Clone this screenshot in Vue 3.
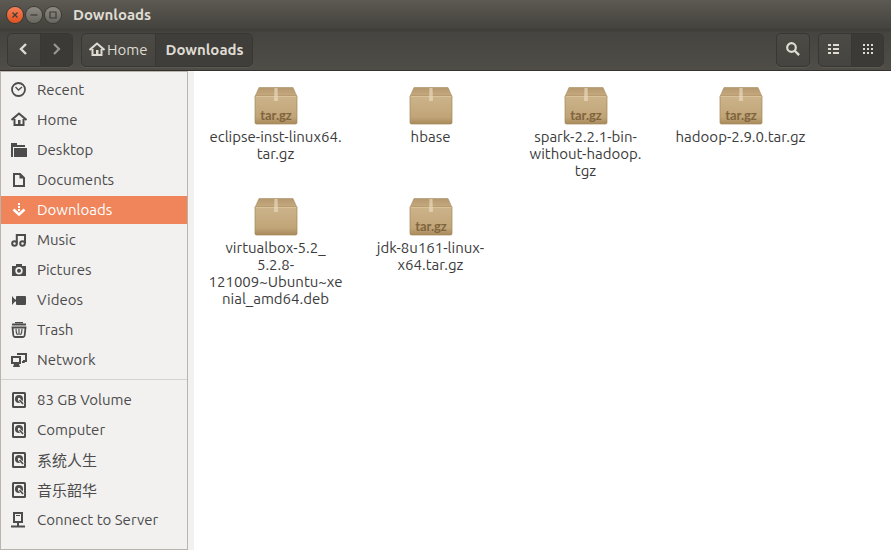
<template>
  <div class="window">
    <header class="header">
      <div class="titlebar">
        <div class="controls">
          <button class="control close" aria-label="Close">
            <svg width="16" height="16" viewBox="0 0 16 16">
              <path d="M5.5 5.5l5 5M10.5 5.5l-5 5" />
            </svg>
          </button>
          <button class="control" aria-label="Minimize">
            <svg width="16" height="16" viewBox="0 0 16 16">
              <path d="M4.5 8h7" />
            </svg>
          </button>
          <button class="control" aria-label="Maximize">
            <svg width="16" height="16" viewBox="0 0 16 16">
              <path d="M5 5h6v6H5z" />
            </svg>
          </button>
        </div>
        <h1 class="title">Downloads</h1>
      </div>

      <div class="toolbar">
        <div class="group">
          <button class="tool" aria-label="Back">
            <svg width="16" height="16" viewBox="0 0 16 16">
              <path d="M10 2L5 7l5 5" fill="none" stroke="currentColor" stroke-width="2.4" />
            </svg>
          </button>
          <button class="tool pressed dim" aria-label="Forward">
            <svg width="16" height="16" viewBox="0 0 16 16">
              <path d="M5 2l5 5-5 5" fill="none" stroke="currentColor" stroke-width="2.2" />
            </svg>
          </button>
        </div>
        <nav class="group path">
          <button class="crumb">
            <svg width="16" height="16" viewBox="0 0 16 16" v-html="icons.home"></svg>
            <span class="label">Home</span>
          </button>
          <button class="crumb current"><span class="label">Downloads</span></button>
        </nav>
        <div class="spacer"></div>
        <div class="group">
          <button class="tool" aria-label="Search">
            <svg width="16" height="16" viewBox="0 0 16 16">
              <circle cx="6.5" cy="5.5" r="4.3" fill="none" stroke="currentColor" stroke-width="2.2" />
              <path d="M9.5 8.5l4.6 4.6" stroke="currentColor" stroke-width="2.4" />
            </svg>
          </button>
        </div>
        <div class="group">
          <button class="tool" aria-label="List view">
            <svg width="16" height="16" viewBox="0 0 16 16" fill="currentColor">
              <path d="M1 2h3v2H1zM1 6h3v2H1zM1 10h3v2H1zM6 2h6v2H6zM6 6h6v2H6zM6 10h6v2H6z" />
            </svg>
          </button>
          <button class="tool pressed" aria-label="Icon view">
            <svg width="16" height="16" viewBox="0 0 16 16" fill="currentColor">
              <path d="M3 2h2v2H3zM7 2h2v2H7zM11 2h2v2h-2zM3 6h2v2H3zM7 6h2v2H7zM11 6h2v2h-2zM3 10h2v2H3zM7 10h2v2H7zM11 10h2v2h-2z" />
            </svg>
          </button>
        </div>
      </div>
    </header>

    <div class="body">
      <aside class="sidebar">
        <ul v-for="(section, i) in places" :key="i" class="section">
          <li v-for="place in section" :key="place.name">
            <a href="#" class="place" :class="{ active: place.name === 'Downloads' }">
              <svg width="16" height="16" viewBox="0 0 16 16" v-html="icons[place.icon]"></svg>
              <span class="label">{{ place.name }}</span>
            </a>
          </li>
        </ul>
      </aside>

      <main class="files">
        <div v-for="file in files" :key="file.name" class="file">
          <svg class="package" width="44" height="38" viewBox="0 0 44 38">
            <defs>
              <linearGradient id="flap" x1="0" y1="0" x2="0" y2="1">
                <stop offset="0" stop-color="#b5986e" />
                <stop offset="1" stop-color="#c6aa80" />
              </linearGradient>
              <linearGradient id="front" x1="0" y1="0" x2="0" y2="1">
                <stop offset="0" stop-color="#cdb38a" />
                <stop offset="0.75" stop-color="#c0a578" />
                <stop offset="1" stop-color="#a98a5c" />
              </linearGradient>
            </defs>
            <path d="M5 0.5h34l4 9H1z" fill="url(#flap)" stroke="#a88d63" stroke-width="0.6" />
            <path d="M1 9h42v26.5q0 1.5-1.5 1.5h-39Q1 37 1 35.5z" fill="url(#front)" stroke="#a48658" stroke-width="0.7" />
            <path d="M1.5 9.5h41" stroke="#d8c299" />
            <path d="M20.5 1h3l.5 13h-4z" fill="#e8d9bd" opacity="0.7" />
            <text v-if="file.tag" class="tag" x="22" y="33" text-anchor="middle">{{ file.tag }}</text>
          </svg>
          <span class="name">{{ file.name }}</span>
        </div>
      </main>
    </div>
  </div>
</template>

<script setup>
const icons = {
  recent:
    '<g fill="none" stroke="currentColor"><circle cx="7.5" cy="7.5" r="6.5" stroke-width="1.8"/><path d="M4.5 5L7.5 8l3.5-3" stroke-width="1.3"/></g>',
  home:
    '<path d="M0.5 8L8 1.5l7.5 6.5M3.5 7v6h9V7" fill="none" stroke="currentColor" stroke-width="2"/><path d="M7 8h2.5v5H7z" fill="currentColor"/>',
  desktop:
    '<path fill="currentColor" d="M0 1h6v2h8v2H2v10H0zM3 6h13v9H3z"/>',
  documents:
    '<path d="M3 2h6l4 4v8H3z" fill="none" stroke="currentColor" stroke-width="2"/><path d="M8.5 1.5V6.5h5z" fill="currentColor"/>',
  downloads:
    '<path fill="currentColor" d="M7 1h2v2H7zM7 4h2v2H7zM7 7h2v2H7z"/><path d="M2.5 7.5L8 12.500l5.500-5" fill="none" stroke="currentColor" stroke-width="2.600"/>',
  music:
    '<g fill="none" stroke="currentColor" stroke-width="2"><circle cx="3.500" cy="11.500" r="2.300"/><circle cx="11.500" cy="11.500" r="2.300"/><path d="M5.800 11.500V3H14v8.500"/></g>',
  pictures:
    '<path fill="currentColor" fill-rule="evenodd" d="M5 2h6v2h4v10H1V4h4zM8 5a3.700 3.700 0 1 0 0 7.400A3.700 3.700 0 0 0 8 5z"/><circle cx="8" cy="8.700" r="2" fill="currentColor"/>',
  videos:
    '<path fill="currentColor" d="M1 4l3 3.500h1v2H4L1 13zM6 4h8q1 0 1 1v7q0 1-1 1H6q-1 0-1-1V5q0-1 1-1z"/>',
  trash:
    '<g fill="none" stroke="currentColor"><path d="M1 2.500h14" stroke-width="2"/><path d="M4 0.700h8" stroke-width="1.400"/><path d="M1.500 5.500h13l-.8 7.500q-.2 2-2 2H4.300q-1.800 0-2-2z" stroke-width="1.800"/><path d="M5 7q0 4 1.500 6M8 7v6M11 7q0 4-1.500 6" stroke-width="1.200"/></g>',
  network:
    '<g fill="none" stroke="currentColor" stroke-width="2"><path d="M1 5h8v6H1z"/><path d="M7 3V2h8v7h-3"/></g><path fill="currentColor" d="M3 12h5l1 3H2zM11 9h2l1 2h-3z"/>',
  disk:
    '<path fill="currentColor" fill-rule="evenodd" d="M2.500 0h11Q15 0 15 1.500v13q0 1.500-1.500 1.500h-11Q1 16 1 14.500v-13Q1 0 2.500 0zM3 2v12h10V2z"/><circle cx="8" cy="7" r="4" fill="currentColor"/><circle cx="8" cy="7" r="1.200" fill="#f2f1f0"/><path d="M8 7.500l4.500 5" stroke="#f2f1f0" stroke-width="2.800"/><path d="M8.500 8l3.500 4" stroke="currentColor" stroke-width="1.600"/>',
  server:
    '<path d="M3 1h8v9H3z" fill="none" stroke="currentColor" stroke-width="2"/><path fill="currentColor" d="M5 3h4v1H5zM6 10h2v4H6zM0 13.500h14v2H0z"/>',
};

const places = [
  [
    { name: "Recent", icon: "recent" },
    { name: "Home", icon: "home" },
    { name: "Desktop", icon: "desktop" },
    { name: "Documents", icon: "documents" },
    { name: "Downloads", icon: "downloads" },
    { name: "Music", icon: "music" },
    { name: "Pictures", icon: "pictures" },
    { name: "Videos", icon: "videos" },
    { name: "Trash", icon: "trash" },
    { name: "Network", icon: "network" },
  ],
  [
    { name: "83 GB Volume", icon: "disk" },
    { name: "Computer", icon: "disk" },
    { name: "系统人生", icon: "disk" },
    { name: "音乐韶华", icon: "disk" },
    { name: "Connect to Server", icon: "server" },
  ],
];

const files = [
  { name: "eclipse-inst-linux64.\ntar.gz", tag: "tar.gz" },
  { name: "hbase" },
  { name: "spark-2.2.1-bin-\nwithout-hadoop.\ntgz", tag: "tar.gz" },
  { name: "hadoop-2.9.0.tar.gz", tag: "tar.gz" },
  { name: "virtualbox-5.2_\n5.2.8-\n121009~Ubuntu~xe\nnial_amd64.deb" },
  { name: "jdk-8u161-linux-\nx64.tar.gz", tag: "tar.gz" },
];
</script>

<style>
body {
  margin: 0;
  background: #fff;
}
</style>

<style scoped>
.window {
  display: flex;
  flex-direction: column;
  min-height: 100vh;
  font-family: Ubuntu, "Noto Sans", "Noto Sans CJK SC", sans-serif;
  font-size: 15px;
  color: #4c4c4c;
}

button {
  margin: 0;
  padding: 0;
  border: 0;
  background: none;
  font: inherit;
  color: inherit;
}

/* 标题栏和工具栏 */
.header {
  color: #dfdbd2;
  background: linear-gradient(#5c5a52, #45433e 28px, #3e3d38 30px, #454440 32px, #4f4d46);
  border-bottom: 1px solid #33322e;
}

.titlebar {
  display: flex;
  align-items: center;
  gap: 12px;
  height: 30px;
  padding: 0 7px;
}

.controls {
  display: flex;
  gap: 3px;
}

.control {
  width: 16px;
  height: 16px;
  border-radius: 50%;
  background: linear-gradient(#8c8a82, #68665f);
  box-shadow: 0 0 0 1px #3a3934;
}

.control svg {
  display: block;
  fill: none;
  stroke: #3c3b37;
  stroke-width: 1.2;
}

.close {
  background: linear-gradient(#f58058, #e0501f);
}

.title {
  margin: 0;
  padding-bottom: 2px;
  font-size: 15px;
  font-weight: 700;
}

.toolbar {
  display: flex;
  align-items: center;
  gap: 8px;
  height: 40px;
  padding: 0 7px;
}

.group {
  display: flex;
  box-sizing: border-box;
  height: 34px;
  border: 1px solid #383733;
  border-radius: 5px;
  overflow: hidden;
  background: linear-gradient(#4b4a44, #454440);
  box-shadow: 0 1px 0 #5b5953;
}

.tool {
  display: flex;
  align-items: center;
  justify-content: center;
  width: 32px;
}

.tool + .tool {
  border-left: 1px solid #383733;
}

.pressed {
  background: #3b3a36;
}

.dim {
  color: #99968e;
}

.crumb {
  display: flex;
  align-items: center;
  gap: 2px;
  padding: 0 8px 0 7px;
}

.current {
  padding: 0 8px 0 9px;
  border-left: 1px solid #383733;
  background: #3f3e3a;
  font-weight: 700;
}

.label {
  padding-bottom: 2px;
}

.spacer {
  flex: 1;
}

/* 主体 */
.body {
  display: flex;
  flex: 1;
}

.sidebar {
  box-sizing: border-box;
  width: 188px;
  padding-top: 4px;
  border: 1px solid #b9b4ae;
  background: #f2f1f0;
}

.section {
  display: flex;
  flex-direction: column;
  gap: 2px;
  margin: 0;
  padding: 0;
  list-style: none;
}

.section + .section {
  margin-top: 5px;
  padding-top: 6px;
  border-top: 1px solid #d5d2ce;
}

.place {
  display: flex;
  align-items: center;
  gap: 10px;
  height: 28px;
  padding-left: 10px;
  color: inherit;
  text-decoration: none;
}

.active {
  color: #fff;
  background: #f0855b;
}

.files {
  display: grid;
  flex: 1;
  grid-template-columns: repeat(auto-fill, 155px);
  align-content: start;
  gap: 19px 0;
  padding: 16px 4px;
  border-left: 6px solid #f2f1f0;
}

.file {
  display: flex;
  flex-direction: column;
  align-items: center;
  gap: 3px;
}

.package {
  flex: none;
}

.tag {
  font-family: Lato, sans-serif;
  font-size: 13px;
  font-weight: 700;
  fill: #7f643e;
}

.name {
  color: #3c3c3c;
  line-height: 17px;
  text-align: center;
  white-space: pre-line;
}
</style>
